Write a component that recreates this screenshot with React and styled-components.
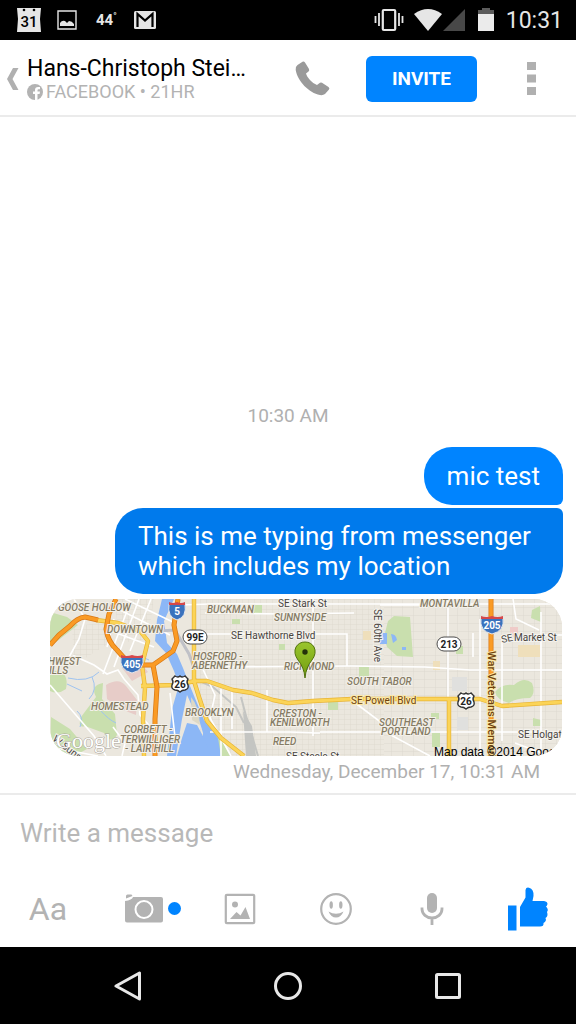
import React from "react";
import styled, { createGlobalStyle } from "styled-components";

const GlobalStyle = createGlobalStyle`
  * { box-sizing: border-box; }
  body { margin: 0; background: #fff; font-family: Roboto, "Noto Sans", sans-serif; }
  button { border: 0; padding: 0; background: none; font: inherit; color: inherit; cursor: pointer; }
  svg { display: block; }
`;

const Screen = styled.div`
  min-height: 100vh;
  display: flex;
  flex-direction: column;
`;

const StatusBar = styled.div`
  height: 40px;
  padding: 0 13px 0 16px;
  background: #000;
  color: #e6e6e6;
  display: flex;
  align-items: center;
  justify-content: space-between;
`;

const StatusGroup = styled.div`
  display: flex;
  align-items: center;
  gap: ${(p) => p.$gap}px;
`;

const Temperature = styled.span`
  width: 26px;
  padding-left: 4px;
  white-space: nowrap;
  font-size: 15px;
  font-weight: 700;
  line-height: 20px;
  sup { font-size: 9px; line-height: 0; }
`;

const Clock = styled.time`
  margin-left: 12px;
  padding-top: 2px;
  font-size: 23px;
  line-height: 38px;
`;

const Header = styled.header`
  height: 77px;
  padding: 2px 34px 0 7px;
  border-bottom: 2px solid #ebebeb;
  display: flex;
  align-items: center;
`;

const Contact = styled.div`
  flex: 1;
  min-width: 0;
  padding-left: 8px;
`;

const ContactName = styled.h1`
  margin: 0;
  font-size: 23px;
  font-weight: 400;
  line-height: 26px;
  color: #000;
  white-space: nowrap;
`;

const ContactStatus = styled.div`
  display: flex;
  align-items: center;
  gap: 3px;
  font-size: 18px;
  line-height: 20px;
  color: #b3b3b3;
`;

const InviteButton = styled.button`
  width: 111px;
  height: 46px;
  margin: 0 43px 0 36px;
  border-radius: 6px;
  background: #0084ff;
  color: #fff;
  font-size: 19px;
  font-weight: 700;
`;

const MenuButton = styled.button`
  width: 22px;
  display: flex;
  justify-content: center;
`;

const Conversation = styled.main`
  flex: 1;
  padding: 24px 13px 9px;
  display: flex;
  flex-direction: column;
  justify-content: flex-end;
  align-items: flex-end;
`;

const TimeDivider = styled.time`
  align-self: center;
  margin-bottom: 19px;
  font-size: 19px;
  line-height: 24px;
  color: #b0b0b0;
`;

const Bubble = styled.p`
  margin: 0 0 ${(p) => (p.$last ? 5 : 3)}px;
  max-width: calc(100% - 102px);
  padding: ${(p) => (p.$last ? 13 : 14)}px 23px;
  font-size: 26px;
  line-height: 30px;
  color: #fff;
  background: ${(p) => (p.$last ? "#007aec" : "#0084ff")};
  border-radius: ${(p) => (p.$last ? "28px 6px 28px 28px" : "28px 28px 6px 28px")};
`;

const MapCard = styled.figure`
  margin: 0 1px 0 0;
  width: calc(100% - 38px);
  border-radius: 28px;
  overflow: hidden;
  background: #e9e5dc;
  svg { width: 100%; height: auto; }
`;

const SentTime = styled.time`
  margin-right: 23px;
  padding-top: 4px;
  font-size: 19px;
  line-height: 24px;
  color: #b0b0b0;
`;

const Composer = styled.form`
  border-top: 2px solid #ebebeb;
`;

const MessageInput = styled.input`
  display: block;
  width: 100%;
  height: 75px;
  padding: 0 20px;
  border: 0;
  outline: 0;
  background: none;
  font: 400 26px/30px Roboto, sans-serif;
  color: #333;
  &::placeholder { color: #b8b8b8; opacity: 1; }
`;

const Tools = styled.div`
  height: 77px;
  display: grid;
  grid-template-columns: repeat(6, 1fr);
`;

const Tool = styled.button`
  position: relative;
  display: flex;
  align-items: center;
  justify-content: center;
  font-size: 32px;
  line-height: 40px;
  color: ${(p) => (p.$active ? "#0084ff" : "#b3b3b3")};
`;

const NewDot = styled.span`
  position: absolute;
  left: calc(50% + 24px);
  top: calc(50% - 7px);
  width: 13px;
  height: 13px;
  border-radius: 50%;
  background: #0084ff;
`;

const NavBar = styled.nav`
  height: 77px;
  padding: 0 48px;
  background: #000;
  display: grid;
  grid-template-columns: repeat(3, 1fr);
`;

const NavButton = styled.button`
  display: flex;
  align-items: center;
  justify-content: center;
`;

const Area = styled.text`
  font: italic 500 10px Roboto, sans-serif;
  fill: #857b64;
  stroke: #f3f0e9;
  stroke-width: 2px;
  paint-order: stroke;
`;

const Street = styled.text`
  font: ${(p) => (p.$bold ? "500 11px" : "400 10px")} Roboto, sans-serif;
  fill: ${(p) => (p.$major ? "#70420c" : "#48443e")};
  stroke: ${(p) => (p.$major ? "#fce9a8" : "#f5f3ee")};
  stroke-width: 2px;
  paint-order: stroke;
`;

const ShieldText = styled.text`
  font: 700 10px Roboto, sans-serif;
  text-anchor: middle;
  fill: ${(p) => (p.$light ? "#fff" : "#222")};
`;

const Credit = styled.text`
  font: 400 12px "Liberation Sans", sans-serif;
  fill: #000;
`;

const Logo = styled.text`
  font: 400 22px "Liberation Serif", serif;
  fill: #fff;
  stroke: #aaa69c;
  stroke-width: 1px;
  paint-order: stroke;
`;

const AREAS = [
  [8, 12, "GOOSE HOLLOW"], [57, 34, "DOWNTOWN"], [-2, 66, "HWEST"], [-1, 75, "ILLS"],
  [41, 111, "HOMESTEAD"], [74, 134, "CORBETT -"], [70, 144, "TERWILLIGER"], [75, 153, "- LAIR HILL"],
  [157, 14, "BUCKMAN"], [224, 22, "SUNNYSIDE"], [143, 61, "HOSFORD -"], [142, 70, "ABERNETHY"],
  [234, 71, "RICHMOND"], [297, 86, "SOUTH TABOR"], [135, 117, "BROOKLYN"],
  [223, 118, "CRESTON -"], [220, 127, "KENILWORTH"], [223, 146, "REED"],
  [370, 8, "MONTAVILLA"], [329, 127, "SOUTHEAST"], [331, 136, "PORTLAND"],
];

const STREETS = [
  [228, 8, "SE Stark St"], [181, 40, "SE Hawthorne Blvd"],
  [464, 42, "Market St"], [468, 139, "SE Holgate"], [236, 161, "SE Steele St"],
];

function Interstate({ x, y, label, wide }) {
  const w = wide ? 11 : 8;
  return (
    <g transform={`translate(${x} ${y})`}>
      <path d={`M${-w} -6Q${-w - 2} 7 0 10Q${w + 2} 7 ${w} -6Z`} fill="#3a72bd" stroke="#e9e9ec" />
      <path d={`M${-w} -5V-8Q${-w / 2} -6 0 -8Q${w / 2} -6 ${w} -8V-5Z`} fill="#d5484b" />
      <ShieldText $light y="5">{label}</ShieldText>
    </g>
  );
}

function RoutePill({ x, y, label }) {
  return (
    <g transform={`translate(${x} ${y})`}>
      <rect x="-12" y="-7" width="24" height="14" rx="7" fill="#fff" stroke="#4c4c4c" />
      <ShieldText y="4">{label}</ShieldText>
    </g>
  );
}

function UsShield({ x, y, label }) {
  return (
    <g transform={`translate(${x} ${y})`}>
      <path d="M-5 -8Q-2 -6 0 -8Q2 -6 5 -8L8 -5Q6 -2 8 1Q9 5 5 6Q2 6 0 8Q-2 6 -5 6Q-9 5 -8 1Q-6 -2 -8 -5Z" fill="#fff" stroke="#333" strokeWidth="1.4" />
      <ShieldText y="4">{label}</ShieldText>
    </g>
  );
}

function LocationMap() {
  return (
    <svg viewBox="0 0 512 157" role="img" aria-label="Map of my location in Portland">
      <defs>
        <pattern id="blocks" width="6" height="5" patternUnits="userSpaceOnUse">
          <path d="M0 0H6M0 0V5" stroke="#dcd8ce" strokeWidth=".8" fill="none" />
        </pattern>
        <pattern id="blocksWide" width="11" height="8" patternUnits="userSpaceOnUse">
          <path d="M0 0H11M0 0V8" stroke="#dcd8ce" strokeWidth=".9" fill="none" />
        </pattern>
        <linearGradient id="pin" x1="0" y1="0" x2="0" y2="1">
          <stop offset="0" stopColor="#9ac52c" />
          <stop offset="1" stopColor="#719d10" />
        </linearGradient>
      </defs>
      <rect width="512" height="157" fill="#ebe7de" />
      <rect x="150" width="184" height="157" fill="url(#blocks)" />
      <rect x="334" width="178" height="157" fill="url(#blocksWide)" />
      <path d="M22 28L60 22L58 45L24 66ZM64 0H104L98 40L70 44Z" fill="url(#blocks)" />

      <g fill="#c9dfae">
        <path d="M0 13L17 18L28 26L15 36L6 43H0ZM53 84Q40 86 46 98L31 118Q27 130 35 127L54 134Q61 146 67 136L65 115L52 100ZM0 72Q20 70 16 90Q8 96 0 92ZM1 118L20 130L37 150L24 157H0Z" />
        <path d="M203 6h9v9h-9zM229 45h6v6h-6zM309 68h10v10h-10zM278 103h10v8h-10zM182 20h8v5h-8z" />
        <path d="M344 17L360 18L363 58L347 57L337 48L334 38L338 22ZM445 93Q452 84 464 86Q474 77 482 84Q486 94 480 99Q466 99 459 104Q447 101 445 93ZM482 11l8-4 1 16-10-4zM381 114h8v6h-8zM483 119l8 2v6h-8zM406 47h7v8h-7zM382 134h8v14h-8z" />
        <path d="M153 126L170 138L180 157H157Z" />
      </g>
      <path d="M56 86Q69 78 76 87L87 101L86 116Q69 110 57 100ZM72 69l17-8 9 12-16 9z" fill="#e7ccc8" />
      <path d="M460 28h8v10h-8z" fill="#efcbc8" />
      <path d="M468 46h22v12h-22zM383 62h7v9h-7zM313 32h8v9h-8z" fill="#efdfbb" />
      <path d="M402 78h15v14h-15zM407 118h11v13h-11z" fill="#e0e0de" />
      <path d="M145 80L163 88L186 108L194 124M191 98L200 132L203 157M194 110L208 157" stroke="#c4c5c2" strokeWidth="2" fill="none" />
      <path d="M193 112l9 15 4 30h-10z" fill="#c4c5c2" />

      <g fill="#8cb7f6">
        <path d="M112 0L107 21L105 42L116 54L124 72L129 86L122 110L117 157H126L132 120L137 96L142 107L150 124L153 134V157H171L168 139L154 121L147 104L140 87L133 69L127 55L117 44L114 22L124 0Z" />
        <path d="M137 124L147 126L154 139L161 157H127L132 139Z" />
        <path d="M333 34h4v11h-7v-7zM341 35q5 0 6 6l-4 3zM352 48h4v3h-4z" />
      </g>
      <path d="M141 98Q149 107 150 126L142 121Z" fill="#ddd8c5" />
      <g stroke="#9fc3ef" fill="none">
        <path d="M18 79Q38 84 49 73M42 78Q48 91 39 100M50 111Q59 121 66 124M27 112Q34 118 30 128M17 85L32 92M81 62Q91 56 99 61" />
      </g>

      <g stroke="#fff" fill="none" strokeWidth="1.6">
        <path d="M24 0L35 20L29 40L18 60L24 57L44 66L57 75L68 71L74 80L88 96L90 116L104 132M64 20L57 48M77 12L53 75M89 0L64 68M101 0L80 52M75 0L125 24M70 11L120 36M61 32L104 48M0 86L19 108L44 137L56 157M63 128L75 144L72 157" />
        <path d="M130 6L160 5H512M138 35H297V67M155 14L230 15L304 14M157 68L302 67L375 68L420 71H512M263 0V137M171 90V157M182 91V130M398 0V157M430 20V157M491 13V157M120 94L125 138M0 148L48 157M304 103L332 124L337 134L380 157M270 133H512M160 133H240L270 134M423 34V58M463 0L466 20L489 31M452 36V142M482 36H512M465 144L500 157M217 91V133M143 49L165 96L160 119L181 157M330 6H400" />
      </g>
      <path d="M109 32L125 31L139 55L143 66" stroke="#c0c1c7" strokeWidth="3" fill="none" />

      <g fill="none" strokeLinejoin="round">
        <g stroke="#e8b435" strokeWidth="4.4">
          <path d="M46 21L68 24L90 32L98 42L92 66L95 89L93 120L94 157M91 87L125 86L145 82H157L183 91L202 94L223 101L238 104L263 102L302 100H430L452 107L512 103M144 0V82L149 98L157 122L171 139L194 157M399 101V157" />
        </g>
        <g stroke="#fbd458" strokeWidth="3">
          <path d="M46 21L68 24L90 32L98 42L92 66L95 89L93 120L94 157M91 87L125 86L145 82H157L183 91L202 94L223 101L238 104L263 102L302 100H430L452 107L512 103M144 0V82L149 98L157 122L171 139L194 157M399 101V157" />
        </g>
        <path d="M0 46L9 36L20 27Q27 19 35 18L48 21M66 0L59 15L56 30Q58 43 67 51L75 60L87 66H103L123 52L127 42L124 26L128 0M103 66L107 88L105 120V157M441 0V157" stroke="#d87816" strokeWidth="5" />
        <path d="M0 46L9 36L20 27Q27 19 35 18L48 21M66 0L59 15L56 30Q58 43 67 51L75 60L87 66H103L123 52L127 42L124 26L128 0M103 66L107 88L105 120V157M441 0V157" stroke="#fa9b25" strokeWidth="3.6" />
      </g>

      {AREAS.map(([x, y, label]) => <Area key={label} x={x} y={y}>{label}</Area>)}
      {STREETS.map(([x, y, label]) => <Street key={label} x={x} y={y}>{label}</Street>)}
      <Street transform="translate(452 44) rotate(-12)">SE</Street>
      <Street $major x="301" y="105">SE Powell Blvd</Street>
      <Street transform="translate(324 10) rotate(90)">SE 60th Ave</Street>
      <Street $major $bold transform="translate(438 52) rotate(90)">War Veterans Memorial</Street>
      <Street transform="translate(2 141) rotate(38)">W Sunset</Street>
      <Interstate x={127} y={11} label="5" />
      <Interstate x={82} y={64} label="405" wide />
      <Interstate x={442} y={25} label="205" wide />
      <RoutePill x={145} y={38} label="99E" />
      <RoutePill x={399} y={45} label="213" />
      <UsShield x={130} y={85} label="26" />
      <UsShield x={416} y={102} label="26" />
      <Logo x="6" y="149">Google</Logo>
      <Credit x="384" y="157">Map data ©2014 Google</Credit>
      <path d="M255 79Q254 68 248 61Q243 54 246 48Q249 43 255 43Q261 43 264 48Q267 54 262 61Q256 68 255 79Z" fill="url(#pin)" stroke="#52720d" strokeWidth="1" />
      <circle cx="255" cy="53" r="2.7" fill="#24320a" />
    </svg>
  );
}

const CalendarIcon = () => (
  <svg width="26" height="26" viewBox="0 0 26 26">
    <path d="M1 1H25L24 12L25 25H1L2 12Z" fill="#e6e6e6" />
    <circle cx="8" cy="3" r="1.3" /><circle cx="18" cy="3" r="1.3" />
    <text x="13" y="20" textAnchor="middle" fontSize="15" fontWeight="500">31</text>
  </svg>
);
const PictureIcon = () => (
  <svg width="20" height="20" viewBox="0 0 20 20">
    <path d="M1 1H19V19H1Z" fill="none" stroke="#e6e6e6" strokeWidth="1.4" />
    <path d="M3 16V13Q5 10 8 11L10 13L12 11Q15 11 17 14V16Z" fill="#e6e6e6" />
  </svg>
);
const MailIcon = () => (
  <svg width="24" height="20" viewBox="0 0 24 20">
    <rect x="1" y="1" width="22" height="18" rx="1.5" fill="#e6e6e6" />
    <path d="M4.500 17V4L12 10.500L19.500 4V17" fill="none" stroke="#000" strokeWidth="2.2" />
  </svg>
);
const VibrateIcon = () => (
  <svg width="30" height="24" viewBox="0 0 30 24" fill="none" stroke="#e6e6e6">
    <rect x="8.800" y="2" width="12.400" height="20" rx="1" strokeWidth="2.2" />
    <path d="M1.500 8V15M5 5V18M25 5V18M28.500 8V15" strokeWidth="1.8" />
  </svg>
);
const WifiIcon = () => (
  <svg width="30" height="24" viewBox="0 0 30 24"><path d="M1 6Q15 -4 29 6L15 23Z" fill="#e6e6e6" /></svg>
);
const SignalIcon = () => (
  <svg width="22" height="24" viewBox="0 0 22 24"><path d="M22 1V23H0Z" fill="#484848" /></svg>
);
const BatteryIcon = () => (
  <svg width="16" height="24" viewBox="0 0 16 24">
    <path d="M0 2H4V0H12V2H16V7H0Z" fill="#5c5c5c" />
    <path d="M0 6H16V23H0Z" fill="#ebebeb" />
  </svg>
);
const BackIcon = () => (
  <svg width="12" height="24" viewBox="0 0 12 24"><path d="M6 1H11.500L5.500 12L11.500 23H6L0 12Z" fill="#b0b0b0" /></svg>
);
const BadgeIcon = () => (
  <svg width="16" height="16" viewBox="0 0 16 16">
    <circle cx="8" cy="8" r="8" fill="#b3b3b3" />
    <path d="M8 16V10H6V7.500H8V6Q8 3 11 3H13V5.300H11.500Q10.500 5.300 10.500 6.500V7.500H13L12.600 10H10.500V16Z" fill="#fff" />
  </svg>
);
const PhoneIcon = () => (
  <svg width="35" height="35" viewBox="0 0 35 35">
    <path d="M2.500 4L7.500 .7Q9 0 10 1.500L14 8Q14.600 9.500 13.500 10.500L11 12.500C12 16.500 17 22 22 24L25 21.800Q26 21 27 21.800L33.500 26Q35 27 34 28.500L30 33Q28 34.500 25 34C14 32 2.500 20 .7 9Q.300 5.500 2.500 4Z" fill="#9a9a9a" />
  </svg>
);
const DotsIcon = () => (
  <svg width="9" height="33" viewBox="0 0 9 33"><path d="M0 0H9V8H0ZM0 12.500H9V20.500H0ZM0 25H9V33H0Z" fill="#b0b0b0" /></svg>
);
const CameraIcon = () => (
  <svg width="38" height="30" viewBox="0 0 38 30">
    <path d="M1 4.500V2Q1 .5 2.500 .5H6.500L7.500 2ZM0 10V7Q7 6 8 3H36Q38 3 38 5V26.500Q38 28.500 36 28.500H2Q0 28.500 0 26.500Z" fill="currentColor" />
    <circle cx="19" cy="15.500" r="8.500" fill="none" stroke="#fff" strokeWidth="2" />
  </svg>
);
const GalleryIcon = () => (
  <svg width="32" height="32" viewBox="0 0 32 32" fill="currentColor">
    <rect x="1.800" y="1.800" width="28.400" height="28.400" rx="1" fill="none" stroke="currentColor" strokeWidth="2.200" />
    <circle cx="11" cy="11.500" r="3" />
    <path d="M6 26L12.500 19L16.500 22.500L21.500 14L26 26Z" />
  </svg>
);
const SmileIcon = () => (
  <svg width="32" height="32" viewBox="0 0 32 32" fill="currentColor">
    <circle cx="16" cy="16" r="14.800" fill="none" stroke="currentColor" strokeWidth="2.200" />
    <ellipse cx="11.200" cy="12" rx="1.700" ry="3.700" /><ellipse cx="20.800" cy="12" rx="1.700" ry="3.700" />
    <path d="M8.500 18.500Q16 23 23.500 18.500Q21 24.500 16 24.500Q11 24.500 8.500 18.500Z" />
  </svg>
);
const MicIcon = () => (
  <svg width="24" height="34" viewBox="0 0 24 34" fill="none" stroke="currentColor">
    <rect x="7" y="1" width="10" height="20" rx="5" fill="currentColor" stroke="none" />
    <path d="M2 15.500V17A10 9 0 0 0 22 17V15.500M12 26V33" strokeWidth="2.800" />
  </svg>
);
const ThumbIcon = () => (
  <svg width="42" height="44" viewBox="0 0 42 44" fill="currentColor">
    <path d="M1 18.500H9.500V43.500H1ZM13 20L18.500 10.500V3Q19 0 22 .7Q27 2 26.500 9L25.500 14H37Q40.500 14.500 40.500 17Q40 19 39 19.500Q42 22.500 40 25Q41.500 29 38.500 31Q40 34 36.500 36Q37 39.500 33 39.500H13Z" />
  </svg>
);

export default function App() {
  return (
    <Screen>
      <GlobalStyle />
      <StatusBar>
        <StatusGroup $gap={15}>
          <CalendarIcon />
          <PictureIcon />
          <Temperature>44<sup>°</sup></Temperature>
          <MailIcon />
        </StatusGroup>
        <StatusGroup $gap={0}>
          <StatusGroup $gap={9}><VibrateIcon /><WifiIcon /></StatusGroup>
          <StatusGroup $gap={13}><SignalIcon /><BatteryIcon /></StatusGroup>
          <Clock>10:31</Clock>
        </StatusGroup>
      </StatusBar>

      <Header>
        <button type="button" aria-label="Back"><BackIcon /></button>
        <Contact>
          <ContactName>Hans-Christoph Stei…</ContactName>
          <ContactStatus><BadgeIcon />FACEBOOK • 21HR</ContactStatus>
        </Contact>
        <button type="button" aria-label="Call"><PhoneIcon /></button>
        <InviteButton type="button">INVITE</InviteButton>
        <MenuButton type="button" aria-label="More options"><DotsIcon /></MenuButton>
      </Header>

      <Conversation>
        <TimeDivider>10:30 AM</TimeDivider>
        <Bubble>mic test</Bubble>
        <Bubble $last>This is me typing from messenger which includes my location</Bubble>
        <MapCard><LocationMap /></MapCard>
        <SentTime>Wednesday, December 17, 10:31 AM</SentTime>
      </Conversation>

      <Composer onSubmit={(e) => e.preventDefault()}>
        <MessageInput type="text" aria-label="Write a message" placeholder="Write a message" />
        <Tools>
          <Tool type="button" aria-label="Text">Aa</Tool>
          <Tool type="button" aria-label="Camera"><CameraIcon /><NewDot /></Tool>
          <Tool type="button" aria-label="Gallery"><GalleryIcon /></Tool>
          <Tool type="button" aria-label="Stickers"><SmileIcon /></Tool>
          <Tool type="button" aria-label="Record voice"><MicIcon /></Tool>
          <Tool type="button" aria-label="Like" $active><ThumbIcon /></Tool>
        </Tools>
      </Composer>

      <NavBar aria-label="System">
        <NavButton type="button" aria-label="Back">
          <svg width="28" height="30" viewBox="0 0 28 30"><path d="M25.500 2V28L2 15Z" fill="none" stroke="#e8e8e8" strokeWidth="3" strokeLinejoin="round" /></svg>
        </NavButton>
        <NavButton type="button" aria-label="Home">
          <svg width="28" height="28" viewBox="0 0 28 28"><circle cx="14" cy="14" r="12.500" fill="none" stroke="#e8e8e8" strokeWidth="3" /></svg>
        </NavButton>
        <NavButton type="button" aria-label="Recent apps">
          <svg width="26" height="26" viewBox="0 0 26 26"><rect x="1.500" y="1.500" width="23" height="23" rx="1" fill="none" stroke="#e8e8e8" strokeWidth="3" /></svg>
        </NavButton>
      </NavBar>
    </Screen>
  );
}
